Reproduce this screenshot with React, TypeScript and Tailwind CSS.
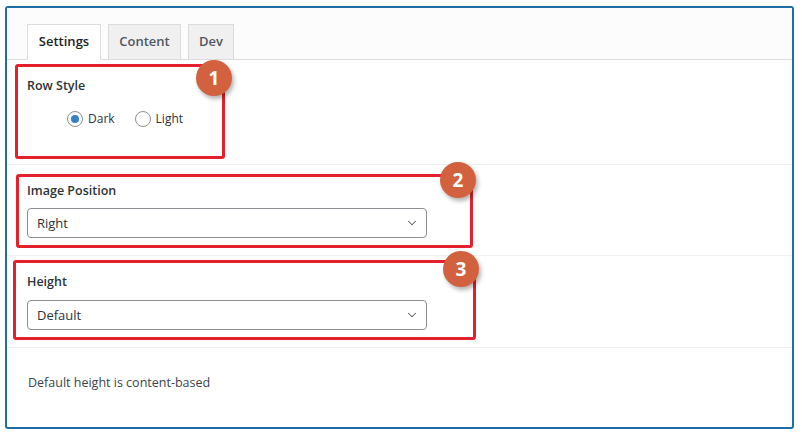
import { ChevronDown } from 'lucide-react';

const font = { fontFamily: '"Open Sans", "Liberation Sans", sans-serif' };

function Badge({ n, className }: { n: number; className: string }) {
  return (
    <div
      className={`absolute w-[36px] h-[36px] rounded-full bg-[#d2623f] flex items-center justify-center text-white text-[19px] font-bold shadow-[2px_3px_4px_rgba(0,0,0,0.3)] ${className}`}
    >
      {n}
    </div>
  );
}

function Select({ value }: { value: string }) {
  return (
    <div className="w-[400px] h-[30px] border border-[#8c8f94] rounded-[4px] flex items-center justify-between pl-[9px] pr-[7px] text-[13px] text-[#2c3338]">
      <span className="pt-[2px]">{value}</span>
      <ChevronDown className="w-[14px] h-[14px] text-[#50575e]" strokeWidth={1.75} />
    </div>
  );
}

function Radio({ label, checked }: { label: string; checked?: boolean }) {
  return (
    <div className="flex items-center gap-[5px]">
      <div className="w-[16px] h-[16px] rounded-full border border-[#8c8f94] flex items-center justify-center bg-white">
        {checked && <div className="w-[8px] h-[8px] rounded-full bg-[#3582c4]" />}
      </div>
      <span className="text-[12px] text-[#2c3338]">{label}</span>
    </div>
  );
}

export default function App() {
  return (
    <div className="w-[802px] h-[439px] bg-white pt-[6px] pl-[5px]" style={font}>
      <div className="relative w-[789px] h-[423px] border-2 border-[#1f6fa6] rounded-[3px] flex flex-col">
        {/* tabs */}
        <div className="flex items-end gap-[7px] pl-[20px] pt-[16px] border-b border-[#dcdcde] bg-[#fcfcfc]">
          <div className="w-[74px] h-[36px] -mb-px flex items-center justify-center bg-white border border-[#dcdcde] border-b-white text-[13px] font-semibold text-[#1d2327]">
            Settings
          </div>
          <div className="w-[73px] h-[35px] flex items-center justify-center bg-[#f0f0f1] border border-[#dcdcde] border-b-0 text-[13px] font-semibold text-[#50575e]">
            Content
          </div>
          <div className="w-[46px] h-[35px] flex items-center justify-center bg-[#f0f0f1] border border-[#dcdcde] border-b-0 text-[13px] font-semibold text-[#50575e]">
            Dev
          </div>
        </div>

        {/* row style */}
        <div className="h-[105px] border-b border-[#f0f0f1] px-[20px] pt-[17px]">
          <div className="text-[12.5px] leading-[18px] font-semibold text-[#2c3338]">Row Style</div>
          <div className="flex items-center gap-[20px] ml-[40px] mt-[15px]">
            <Radio label="Dark" checked />
            <Radio label="Light" />
          </div>
        </div>

        {/* image position */}
        <div className="h-[91px] border-b border-[#f0f0f1] px-[20px] pt-[17px]">
          <div className="text-[12.5px] leading-[18px] font-semibold text-[#2c3338]">Image Position</div>
          <div className="mt-[8px]">
            <Select value="Right" />
          </div>
        </div>

        {/* height */}
        <div className="h-[92px] border-b border-[#f0f0f1] px-[20px] pt-[17px]">
          <div className="text-[12.5px] leading-[18px] font-semibold text-[#2c3338]">Height</div>
          <div className="mt-[9px]">
            <Select value="Default" />
          </div>
        </div>

        <div className="px-[21px] pt-[26px]">
          <p className="text-[12.5px] leading-[18px] text-[#3c434a]">Default height is content-based</p>
        </div>

        {/* annotations */}
        <div className="absolute left-[8px] top-[56px] w-[210px] h-[95px] border-[3px] border-[#e3202b] rounded-[3px] pointer-events-none" />
        <div className="absolute left-[9px] top-[166px] w-[457px] h-[74px] border-[3px] border-[#e3202b] rounded-[3px] pointer-events-none" />
        <div className="absolute left-[6px] top-[252px] w-[463px] h-[80px] border-[3px] border-[#e3202b] rounded-[3px] pointer-events-none" />
        <Badge n={1} className="left-[189px] top-[52px]" />
        <Badge n={2} className="left-[433px] top-[154px]" />
        <Badge n={3} className="left-[436px] top-[243px]" />
      </div>
    </div>
  );
}
